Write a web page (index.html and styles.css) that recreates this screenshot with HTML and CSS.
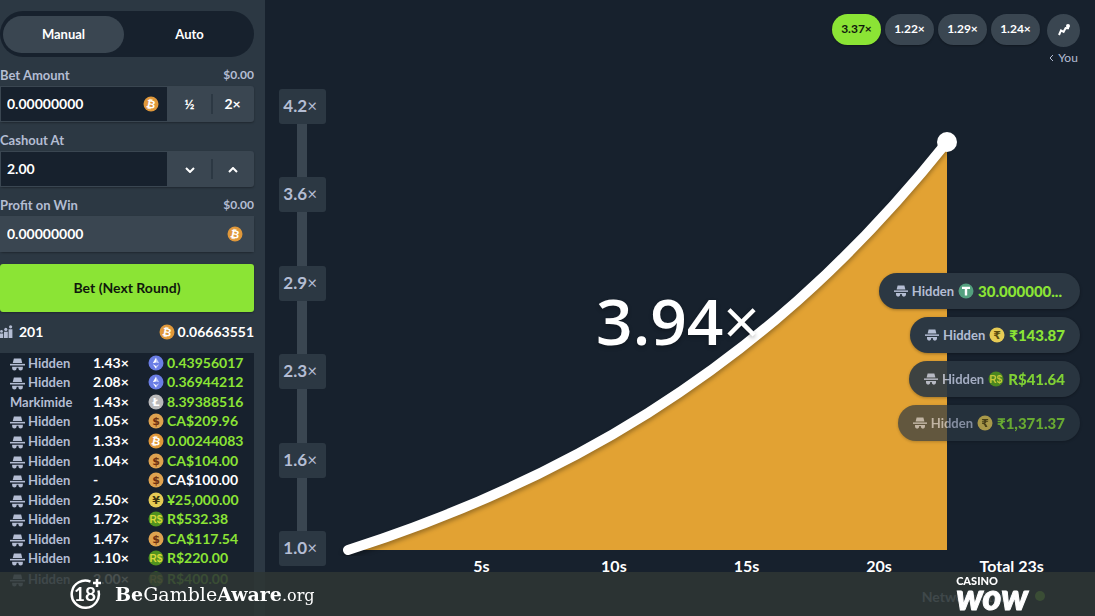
FILE: index.html
```html
<!DOCTYPE html>
<html lang="en">
<head>
  <meta charset="UTF-8">
  <meta name="viewport" content="width=device-width, initial-scale=1.0">
  <title>Crash</title>
  <link rel="stylesheet" href="styles.css">
</head>
<body>

  <svg class="sprites" aria-hidden="true">
    <symbol id="hat" viewBox="0 0 14 12">
      <path d="M3.6 0.4h6.8l1 4.2H2.6z"/>
      <path d="M0 5.4h14v1.5H0z"/>
      <path d="M2 8h4.2v1.6a2.1 2.1 0 0 1-4.2 0zM7.8 8H12v1.6a2.1 2.1 0 0 1-4.2 0zM6 8h2v1H6z"/>
    </symbol>
    <symbol id="btc" viewBox="0 0 16 16">
      <circle cx="8" cy="8" r="7.5" fill="#e0983a"/>
      <text x="8" y="12" class="glyph" fill="#fff" transform="rotate(12 8 8)">₿</text>
    </symbol>
    <symbol id="eth" viewBox="0 0 16 16">
      <circle cx="8" cy="8" r="7.5" fill="#6a7de4"/>
      <path d="M8 2.4v5.2L4.8 8.2z" fill="#fff"/>
      <path d="M8 2.4v5.2l3.2 0.6z" fill="#c3ccf8"/>
      <path d="M4.8 9.2L8 11v2.8z" fill="#fff"/>
      <path d="M11.2 9.2L8 11v2.8z" fill="#c3ccf8"/>
    </symbol>
    <symbol id="ltc" viewBox="0 0 16 16">
      <circle cx="8" cy="8" r="7.5" fill="#b9b9bb"/>
      <text x="8" y="12" class="glyph" fill="#fff">Ł</text>
    </symbol>
    <symbol id="cad" viewBox="0 0 16 16">
      <circle cx="8" cy="8" r="7.5" fill="#dfa350"/>
      <text x="8" y="12" class="glyph" fill="#6f3110">$</text>
    </symbol>
    <symbol id="jpy" viewBox="0 0 16 16">
      <circle cx="8" cy="8" r="7.5" fill="#e6cb55"/>
      <text x="8" y="12" class="glyph" fill="#3c3410">¥</text>
    </symbol>
    <symbol id="inr" viewBox="0 0 16 16">
      <circle cx="8" cy="8" r="7.5" fill="#e6cb55"/>
      <text x="8" y="12" class="glyph" fill="#5c4d10">₹</text>
    </symbol>
    <symbol id="brl" viewBox="0 0 16 16">
      <circle cx="8" cy="8" r="7.5" fill="#51931f"/>
      <text x="8" y="12" class="glyph small" fill="#d6d83a">R$</text>
    </symbol>
    <symbol id="usdt" viewBox="0 0 16 16">
      <circle cx="8" cy="8" r="7.5" fill="#54a07f"/>
      <path d="M4 3.8h8v2.2H9.2v6.4H6.8V6H4z" fill="#fff"/>
    </symbol>
  </svg>

  <div class="app">
    <aside class="sidebar">
      <div class="tabs">
        <button class="tab active">Manual</button>
        <button class="tab">Auto</button>
      </div>

      <div class="field">
        <div class="field-label"><label for="amount">Bet Amount</label><span class="fiat">$0.00</span></div>
        <div class="control">
          <div class="input-box">
            <input id="amount" type="text" value="0.00000000">
            <svg class="coin"><use href="#btc"/></svg>
          </div>
          <button class="control-btn">½</button>
          <button class="control-btn">2×</button>
        </div>
      </div>

      <div class="field">
        <div class="field-label"><label for="cashout">Cashout At</label></div>
        <div class="control">
          <div class="input-box">
            <input id="cashout" type="text" value="2.00">
          </div>
          <button class="control-btn" aria-label="Decrease"><svg class="chevron" viewBox="0 0 10 6"><path d="M1 1l4 4 4-4"/></svg></button>
          <button class="control-btn" aria-label="Increase"><svg class="chevron" viewBox="0 0 10 6"><path d="M1 5l4-4 4 4"/></svg></button>
        </div>
      </div>

      <div class="field">
        <div class="field-label"><label for="profit">Profit on Win</label><span class="fiat">$0.00</span></div>
        <div class="control">
          <div class="input-box readonly">
            <input id="profit" type="text" value="0.00000000" readonly>
            <svg class="coin"><use href="#btc"/></svg>
          </div>
        </div>
      </div>

      <button class="bet-btn">Bet (Next Round)</button>

      <div class="totals">
        <span class="total">
          <svg class="players-icon" viewBox="0 0 13 13">
            <circle cx="1.5" cy="6.4" r="1.4"/><circle cx="5.800" cy="4.4" r="1.6"/><circle cx="10.6" cy="1.800" r="1.6"/>
            <path d="M0 8.6h3.2V13H0zM4 6.8h3.8V13H4zM8.6 4.2h3.8V13H8.600z"/>
          </svg>
          201
        </span>
        <span class="total"><svg class="coin"><use href="#btc"/></svg>0.06663551</span>
      </div>

      <table class="bets">
        <tbody>
          <tr><td><svg class="hat"><use href="#hat"/></svg>Hidden</td><td class="multi">1.43×</td><td class="win"><svg class="coin"><use href="#eth"/></svg>0.43956017</td></tr>
          <tr><td><svg class="hat"><use href="#hat"/></svg>Hidden</td><td class="multi">2.08×</td><td class="win"><svg class="coin"><use href="#eth"/></svg>0.36944212</td></tr>
          <tr><td>Markimide</td><td class="multi">1.43×</td><td class="win"><svg class="coin"><use href="#ltc"/></svg>8.39388516</td></tr>
          <tr><td><svg class="hat"><use href="#hat"/></svg>Hidden</td><td class="multi">1.05×</td><td class="win"><svg class="coin"><use href="#cad"/></svg>CA$209.96</td></tr>
          <tr><td><svg class="hat"><use href="#hat"/></svg>Hidden</td><td class="multi">1.33×</td><td class="win"><svg class="coin"><use href="#btc"/></svg>0.00244083</td></tr>
          <tr><td><svg class="hat"><use href="#hat"/></svg>Hidden</td><td class="multi">1.04×</td><td class="win"><svg class="coin"><use href="#cad"/></svg>CA$104.00</td></tr>
          <tr><td><svg class="hat"><use href="#hat"/></svg>Hidden</td><td>-</td><td class="pending"><svg class="coin"><use href="#cad"/></svg>CA$100.00</td></tr>
          <tr><td><svg class="hat"><use href="#hat"/></svg>Hidden</td><td class="multi">2.50×</td><td class="win"><svg class="coin"><use href="#jpy"/></svg>¥25,000.00</td></tr>
          <tr><td><svg class="hat"><use href="#hat"/></svg>Hidden</td><td class="multi">1.72×</td><td class="win"><svg class="coin"><use href="#brl"/></svg>R$532.38</td></tr>
          <tr><td><svg class="hat"><use href="#hat"/></svg>Hidden</td><td class="multi">1.47×</td><td class="win"><svg class="coin"><use href="#cad"/></svg>CA$117.54</td></tr>
          <tr><td><svg class="hat"><use href="#hat"/></svg>Hidden</td><td class="multi">1.10×</td><td class="win"><svg class="coin"><use href="#brl"/></svg>R$220.00</td></tr>
          <tr><td><svg class="hat"><use href="#hat"/></svg>Hidden</td><td class="multi">2.00×</td><td class="win"><svg class="coin"><use href="#brl"/></svg>R$400.00</td></tr>
        </tbody>
      </table>
    </aside>

    <main class="game">
      <div class="history">
        <div class="history-list">
          <button class="past won">3.37×</button>
          <button class="past">1.22×</button>
          <button class="past">1.29×</button>
          <button class="past">1.24×</button>
        </div>
        <div class="you">
          <button class="trend" aria-label="Trends">
            <svg viewBox="0 0 12 12"><path d="M1 11l2-4.6 2.6 1.4L7.6 4l2.4.2V2"/><circle cx="10" cy="2" r="2"/></svg>
          </button>
          <a href="#" class="you-link"><svg viewBox="0 0 5 8"><path d="M4 1L1 4l3 3"/></svg>You</a>
        </div>
      </div>

      <div class="chart">
        <div class="axis-y">
          <span>4.2<i>×</i></span>
          <span>3.6<i>×</i></span>
          <span>2.9<i>×</i></span>
          <span>2.3<i>×</i></span>
          <span>1.6<i>×</i></span>
          <span>1.0<i>×</i></span>
        </div>
        <div class="plot">
          <svg class="curve" viewBox="0 0 769 467" preserveAspectRatio="xMinYMax meet">
            <path class="area" d="M22 461C122 429 222 387 322 324C422 261 521 178 621 53V461z"/>
            <path class="line" d="M22 461C122 429 222 387 322 324C422 261 521 178 621 53"/>
            <circle class="dot" cx="621" cy="53" r="10"/>
          </svg>
          <div class="axis-x">
            <span>5s</span><span>10s</span><span>15s</span><span>20s</span><span>Total 23s</span>
          </div>
        </div>
        <div class="multiplier">3.94<i>×</i></div>
        <div class="cashouts">
          <div class="cashout"><svg class="hat"><use href="#hat"/></svg>Hidden<svg class="coin"><use href="#usdt"/></svg><b class="clipped">30.000000...</b></div>
          <div class="cashout"><svg class="hat"><use href="#hat"/></svg>Hidden<svg class="coin"><use href="#inr"/></svg><b>₹143.87</b></div>
          <div class="cashout fade"><svg class="hat"><use href="#hat"/></svg>Hidden<svg class="coin"><use href="#brl"/></svg><b>R$41.64</b></div>
          <div class="cashout fade-more"><svg class="hat"><use href="#hat"/></svg>Hidden<svg class="coin"><use href="#inr"/></svg><b>₹1,371.37</b></div>
        </div>
      </div>

      <div class="network">Network Status<span class="status-dot"></span></div>
    </main>
  </div>

  <footer class="banner">
    <div class="aware">
      <svg class="age" viewBox="0 0 32 32">
        <path d="M20.500 3.6A13.6 13.6 0 1 0 28.4 12.500"/>
        <path d="M27 1v8M23 5h8"/>
        <text x="15" y="23">18</text>
      </svg>
      <span class="aware-name"><b>Be</b>Gamble<b>Aware</b><small>.org</small></span>
    </div>
    <div class="logo"><span class="logo-top">CASINO</span><span class="logo-main">wow</span></div>
  </footer>

</body>
</html>
```
FILE: styles.css
```css
* {
  box-sizing: border-box;
}

body {
  margin: 0;
  background: #17212d;
  color: #fff;
  font-family: Lato, sans-serif;
  font-size: 14px;
  font-weight: 700;
  overflow: hidden;
}

button,
input {
  font: inherit;
  color: inherit;
  border: none;
  margin: 0;
  padding: 0;
  background: none;
}

button {
  cursor: pointer;
  padding-bottom: 2px;
}

i {
  font-style: normal;
  font-weight: 400;
}

.sprites {
  display: none;
}

.glyph {
  font: 700 11px "DejaVu Sans", sans-serif;
  text-anchor: middle;
}

.glyph.small {
  font: 700 10px "Liberation Sans", sans-serif;
}

.coin {
  width: 16px;
  height: 16px;
  flex: none;
}

.hat {
  width: 14px;
  height: 12px;
  flex: none;
  fill: #b4bdd3;
}

.app {
  display: flex;
  height: 100vh;
}

/* Sidebar */
.sidebar {
  width: 265px;
  flex: none;
  padding: 11px 11px 0 0;
  background: #2c3843;
  overflow: hidden;
}

.tabs {
  display: flex;
  gap: 5px;
  padding: 5px 4px 4px 3px;
  border-radius: 23px;
  background: #17212d;
}

.tab {
  flex: 1;
  height: 37px;
  border-radius: 19px;
  font-size: 13px;
}

.tab.active {
  background: #3a4651;
}

.field {
  margin-top: 9px;
}

.field-label {
  display: flex;
  justify-content: space-between;
  height: 20px;
  line-height: 18px;
  font-size: 13px;
  color: #b4bdd3;
}

.fiat {
  font-size: 12px;
}

.control {
  display: flex;
  height: 36px;
  border-radius: 3px;
  background: #3a4651;
  box-shadow: 0 1px 2px rgba(0, 0, 0, 0.3);
}

.input-box {
  display: flex;
  align-items: center;
  flex: 1;
  min-width: 0;
  padding: 0 8px 0 6px;
  border: 1px solid #3a4651;
  background: #17212d;
}

.input-box.readonly {
  padding-right: 10px;
  background: #3a4651;
}

.input-box input {
  flex: 1;
  min-width: 0;
  padding-bottom: 2px;
  outline: none;
}

.control-btn {
  position: relative;
  flex: none;
  width: 43px;
}

.control-btn + .control-btn::before {
  content: "";
  position: absolute;
  left: 0;
  top: 8px;
  bottom: 8px;
  width: 2px;
  background: #2c3843;
}

.chevron {
  width: 10px;
  height: 6px;
  fill: none;
  stroke: #fff;
  stroke-width: 2;
  vertical-align: middle;
}

.bet-btn {
  display: block;
  width: 100%;
  height: 48px;
  margin-top: 12px;
  border-radius: 3px;
  background: #8be435;
  color: #10180c;
  box-shadow: 0 1px 2px rgba(0, 0, 0, 0.3);
}

.totals {
  display: flex;
  justify-content: space-between;
  align-items: center;
  height: 41px;
  padding-bottom: 2px;
}

.total {
  display: flex;
  align-items: center;
  gap: 3px;
}

.players-icon {
  width: 13px;
  height: 13px;
  margin-right: 3px;
  fill: #b4bdd3;
}

.bets {
  width: 100%;
  height: 263px;
  border-collapse: collapse;
  background: #17212d;
  border-bottom: 27px solid #17212d;
}

.bets td {
  padding: 0;
  line-height: 18px;
}

.bets td:first-child {
  width: 93px;
  padding-left: 10px;
  font-size: 13px;
  color: #b4bdd3;
}

.bets td:last-child {
  width: 106px;
}

.bets svg {
  margin-right: 3px;
  vertical-align: text-bottom;
}

.bets .hat {
  width: 15px;
  height: 13px;
}

.bets .multi,
.bets .pending {
  color: #fff;
}

.bets .win {
  color: #8be435;
}

/* Game area */
.game {
  display: flex;
  flex-direction: column;
  flex: 1;
  min-width: 0;
}

.history {
  display: flex;
  justify-content: flex-end;
  gap: 7px;
  height: 89px;
  padding: 14px 15px 0 0;
}

.history-list {
  display: flex;
  gap: 4px;
}

.past {
  width: 49px;
  height: 31px;
  border-radius: 16px;
  background: #3a4651;
  font-size: 12px;
  box-shadow: 0 1px 2px rgba(0, 0, 0, 0.3);
}

.past.won {
  background: #8be435;
  color: #10180c;
}

.you {
  display: flex;
  flex-direction: column;
  align-items: center;
  gap: 3px;
}

.trend {
  display: flex;
  align-items: center;
  justify-content: center;
  width: 33px;
  height: 33px;
  border-radius: 50%;
  background: #3a4651;
}

.trend svg {
  width: 12px;
  height: 12px;
  fill: #fff;
}

.trend path {
  fill: none;
  stroke: #fff;
  stroke-width: 2;
}

.you-link {
  display: flex;
  align-items: center;
  gap: 4px;
  font-size: 12px;
  font-weight: 400;
  line-height: 16px;
  color: #b4bdd3;
  text-decoration: none;
}

.you-link svg {
  width: 5px;
  height: 8px;
  fill: none;
  stroke: #b4bdd3;
}

.chart {
  position: relative;
  display: flex;
  flex: 1;
  min-height: 0;
  padding-left: 14px;
}

.axis-y {
  display: flex;
  flex-direction: column;
  justify-content: space-between;
  margin-bottom: 10px;
  background: linear-gradient(#3a4651, #3a4651) 18px 0 / 10px 100% no-repeat;
}

.axis-y span {
  width: 47px;
  height: 35px;
  padding-right: 9px;
  border-radius: 3px;
  background: #2c3843;
  color: #b4bdd3;
  font-size: 17px;
  line-height: 34px;
  text-align: right;
}

.plot {
  display: flex;
  flex-direction: column;
  flex: 1;
  min-width: 0;
}

.curve {
  flex: 1;
  width: 100%;
  min-height: 0;
}

.area {
  fill: #e2a233;
}

.line {
  fill: none;
  stroke: #fff;
  stroke-width: 10;
  stroke-linecap: round;
  filter: drop-shadow(0 3px 2px rgba(0, 0, 0, 0.3));
}

.dot {
  fill: #fff;
}

.axis-x {
  display: grid;
  grid-template-columns: repeat(5, 1fr);
  padding: 0 17px 0 89px;
  font-size: 16px;
  line-height: 20px;
  text-align: center;
}

.multiplier {
  position: absolute;
  left: 0;
  right: 4px;
  top: 50%;
  transform: translateY(-50%);
  margin-top: -12px;
  font-family: "Open Sans", sans-serif;
  font-size: 64px;
  font-weight: 600;
  line-height: 72px;
  text-align: center;
  text-shadow: 0 2px 4px rgba(0, 0, 0, 0.3);
}

.cashouts {
  position: absolute;
  right: 15px;
  top: 184px;
  display: flex;
  flex-direction: column;
  align-items: flex-end;
  gap: 8px;
}

.cashout {
  display: flex;
  align-items: center;
  gap: 4px;
  height: 36px;
  padding: 0 15px;
  border-radius: 18px;
  background: #2c3843;
  color: #b4bdd3;
  font-size: 13px;
  box-shadow: 0 1px 3px rgba(0, 0, 0, 0.3);
}

.cashout b {
  font-size: 15px;
  color: #8be435;
}

.cashout .clipped {
  padding-right: 3px;
}

.cashout.fade {
  opacity: 0.9;
}

.cashout.fade-more {
  opacity: 0.7;
}

.network {
  display: flex;
  align-items: center;
  justify-content: flex-end;
  gap: 16px;
  height: 40px;
  padding-right: 50px;
  color: #b4bdd3;
}

.status-dot {
  width: 10px;
  height: 10px;
  border-radius: 50%;
  background: #8be435;
}

/* Bottom banner */
.banner {
  position: fixed;
  left: 0;
  right: 0;
  bottom: 0;
  display: flex;
  justify-content: space-between;
  align-items: center;
  height: 44px;
  padding: 0 67px 0 70px;
  background: rgba(46, 54, 53, 0.87);
}

.aware {
  display: flex;
  align-items: center;
  gap: 13px;
}

.age {
  width: 32px;
  height: 32px;
  fill: none;
  stroke: #fff;
  stroke-width: 2.5;
}

.age text {
  fill: #fff;
  stroke: none;
  font: 700 19px Lato, sans-serif;
  text-anchor: middle;
}

.aware-name {
  font-family: "DejaVu Serif", serif;
  font-size: 19px;
  font-weight: 400;
}

.aware-name small {
  font-size: 16px;
}

.logo {
  display: flex;
  flex-direction: column;
  font-weight: 900;
  padding-bottom: 6px;
}

.logo-top {
  font-size: 11px;
  line-height: 9px;
}

.logo-main {
  font-size: 36px;
  font-style: italic;
  line-height: 22px;
  -webkit-text-stroke: 1px #fff;
}
```
